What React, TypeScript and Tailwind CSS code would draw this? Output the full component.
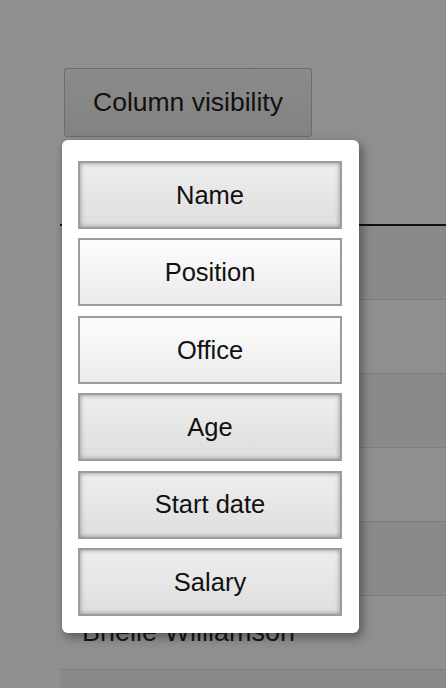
import React from 'react';

interface ColumnToggle {
  label: string;
  visible: boolean;
}

const columns: ColumnToggle[] = [
  { label: 'Name', visible: true },
  { label: 'Position', visible: false },
  { label: 'Office', visible: false },
  { label: 'Age', visible: true },
  { label: 'Start date', visible: true },
  { label: 'Salary', visible: true },
];

// only the row peeking out under the collection carries visible text
const rows = ['', '', '', '', '', 'Brielle Williamson', ''];

const App: React.FC = () => {
  return (
    <div className="relative h-[688px] w-full overflow-hidden bg-[#8f8f8f] pt-[68px] font-['Liberation_Sans',Arial,sans-serif] text-[#111]">
      <button
        type="button"
        className="ml-[64px] flex h-[69px] w-[248px] items-center justify-center rounded-[3px] border border-[#6c6c6c] bg-gradient-to-b from-[#8b8b8b] to-[#828282] text-[26.5px] text-[#111]"
      >
        Column visibility
      </button>

      {/* table behind the overlay */}
      <div className="ml-[60px] w-[600px]">
        <div className="h-[89px] border-b-2 border-[#111]" />
        {rows.map((name, idx) => (
          <div
            key={idx}
            className={`flex h-[74px] items-center border-b border-[#7e7e7e] pl-[22px] text-[27px] text-[#161616] ${
              idx % 2 === 0 ? 'bg-[#8a8a8a]' : 'bg-[#8f8f8f]'
            }`}
          >
            {name}
          </div>
        ))}
      </div>

      {/* column visibility collection */}
      <div className="absolute left-[62px] top-[140px] flex h-[493px] w-[297px] flex-col gap-[9.4px] rounded-[6px] bg-white px-4 pt-[21px] shadow-[3px_4px_10px_1px_rgba(0,0,0,0.35)]">
        {columns.map((col) => (
          <button
            key={col.label}
            type="button"
            className={`flex h-[68px] w-[264px] shrink-0 items-center justify-center border-2 border-[#9c9c9c] text-[25.5px] text-[#111] ${
              col.visible
                ? 'bg-gradient-to-b from-[#eeeeee] to-[#dedede] shadow-[inset_0_0_5px_#8c8c8c]'
                : 'bg-gradient-to-b from-[#fcfcfc] to-[#ebebeb]'
            }`}
          >
            {col.label}
          </button>
        ))}
      </div>
    </div>
  );
};

export default App;
